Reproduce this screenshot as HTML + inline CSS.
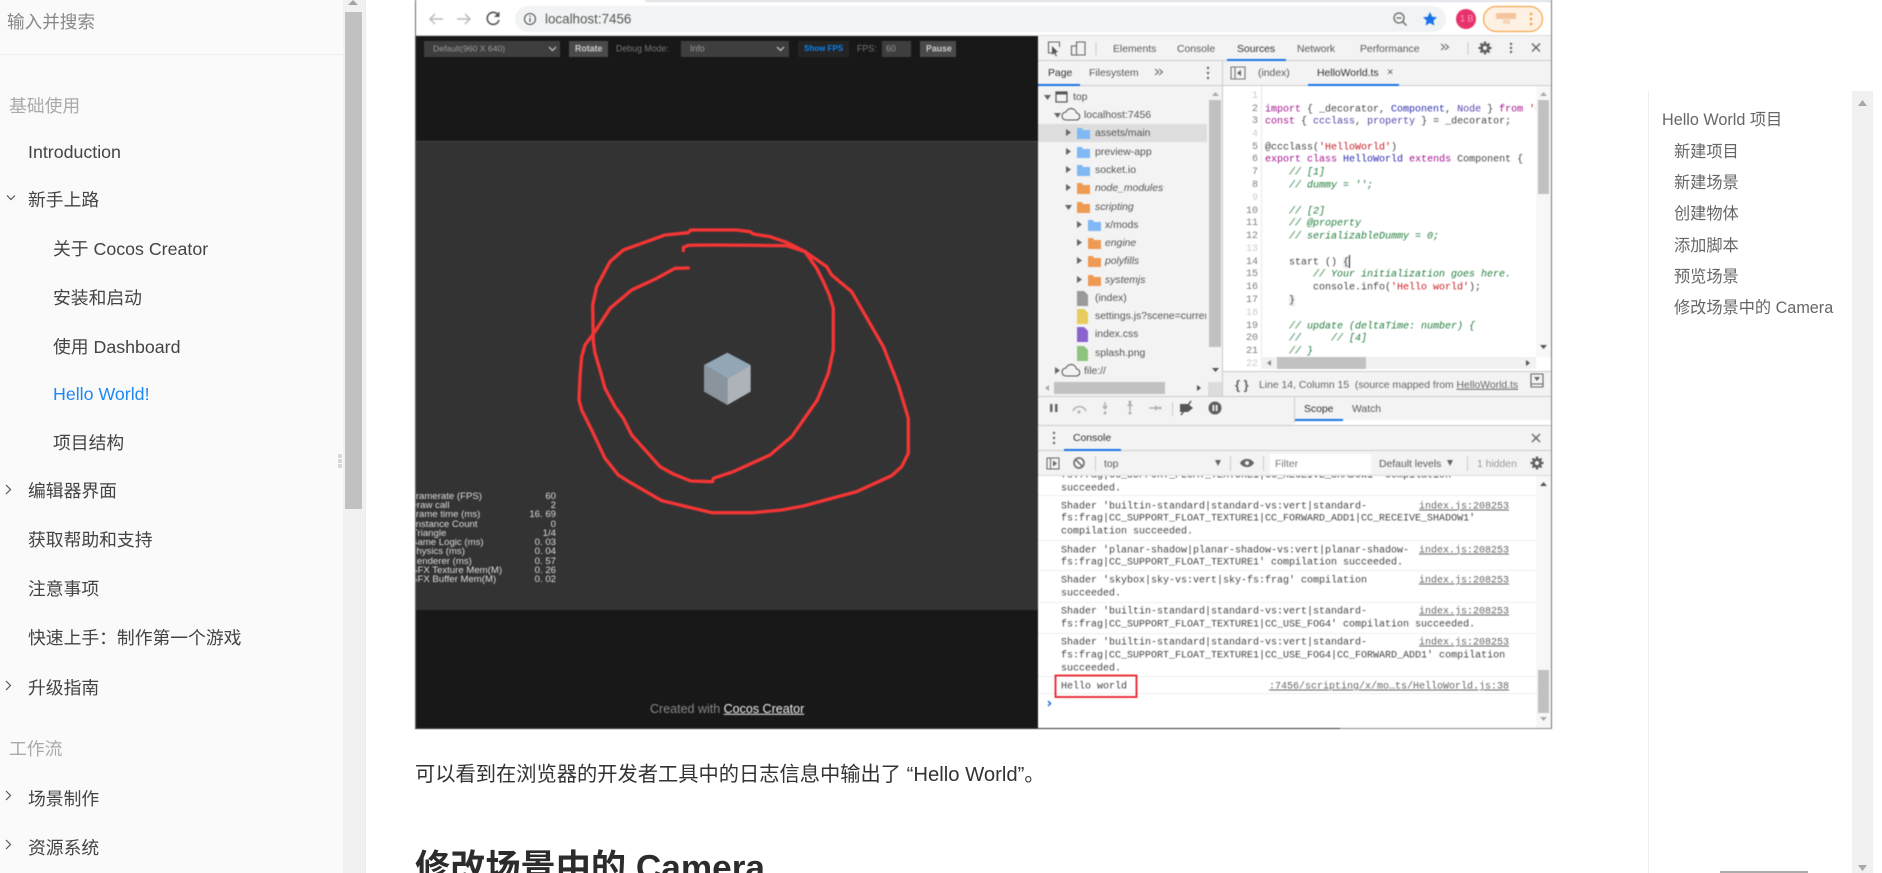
<!DOCTYPE html>
<html lang="zh">
<head>
<meta charset="utf-8">
<title>Hello World</title>
<style>
html,body{margin:0;padding:0;width:1882px;height:873px;overflow:hidden;background:#fff}
body{position:relative;font-family:"Liberation Sans","Noto Sans CJK SC",sans-serif}
svg{position:absolute;left:0;top:0}
.t{position:absolute;white-space:pre;transform:translateY(-50%);line-height:1}
.s{font-size:17.8px;color:#444;margin-top:1.5px}
.g{font-size:17.8px;color:#aaa;margin-top:1.5px}
.c{font-size:16.2px;color:#666;left:1674px;margin-top:1px}
#shot{position:absolute;left:0;top:0;width:1882px;height:873px;filter:blur(.45px)}
.b{font-size:8.8px;color:#999}
.d{font-size:10.4px;color:#5a5a5a;margin-top:1.2px}
.n{font-size:10.4px;color:#555;margin-top:1.2px}
.i{font-style:italic}
.m{font:10px "Liberation Mono",monospace;color:#444;margin-top:1px}
.ln{position:absolute;left:1223px;width:35px;text-align:right;font:10px "Liberation Mono",monospace;color:#808080;transform:translateY(-50%);line-height:1;margin-top:1px}
.l{color:#ccc}
.k{color:#a3128f}.v{color:#2a2ab0}.p{color:#5a3fa8}.q{color:#c8202a}.o{color:#1f7d3a;font-style:italic}
.a{text-decoration:underline;color:#666}
.st{font-size:9.6px;color:#ddd}
</style>
</head>
<body>
<svg width="1882" height="873">
<rect x="0" y="0" width="343" height="873" fill="#fafafa"/>
<rect x="343" y="0" width="22" height="873" fill="#f1f1f1"/>
<rect x="345" y="12" width="17" height="497" fill="#c1c1c1"/>
<polygon points="348,5 353,0 358,5" fill="#a3a3a3"/>
<rect x="365" y="0" width="1" height="873" fill="#ececec"/>
<rect x="0" y="54" width="343" height="1" fill="#eee"/>
<rect x="338" y="454" width="4" height="4" fill="#d8d8d8"/><rect x="338" y="459" width="4" height="4" fill="#d8d8d8"/><rect x="338" y="464" width="4" height="4" fill="#d8d8d8"/>
<g fill="none" stroke="#555" stroke-width="1.2">
<path d="M7 195.500l4 4 4-4"/>
<path d="M6 485l4.500 4.500-4.500 4.500"/>
<path d="M6 681l4.500 4.500-4.500 4.500"/>
<path d="M6 791l4.500 4.500-4.500 4.500"/>
<path d="M6 840l4.500 4.500-4.500 4.500"/>
</g>
<rect x="1648" y="91" width="1" height="782" fill="#eee"/>
<rect x="1852" y="91" width="21" height="782" fill="#f1f1f1"/>
<polygon points="1858,106 1862.500,100 1867,106" fill="#a8a8a8"/>
<polygon points="1858,865 1862.500,871 1867,865" fill="#a8a8a8"/>
<rect x="1720" y="871" width="88" height="2" fill="#aaa"/>
</svg>

<div class="t" style="left:7px;top:23px;font-size:17.6px;color:#888">输入并搜索</div>
<div class="t g" style="left:9px;top:105px">基础使用</div>
<div class="t s" style="left:28px;top:151px">Introduction</div>
<div class="t s" style="left:28px;top:199px">新手上路</div>
<div class="t s" style="left:53px;top:248px">关于 Cocos Creator</div>
<div class="t s" style="left:53px;top:297px">安装和启动</div>
<div class="t s" style="left:53px;top:346px">使用 Dashboard</div>
<div class="t s" style="left:53px;top:393px;color:#1e88f5">Hello World!</div>
<div class="t s" style="left:53px;top:442px">项目结构</div>
<div class="t s" style="left:28px;top:490px">编辑器界面</div>
<div class="t s" style="left:28px;top:539px">获取帮助和支持</div>
<div class="t s" style="left:28px;top:588px">注意事项</div>
<div class="t s" style="left:28px;top:637px">快速上手：制作第一个游戏</div>
<div class="t s" style="left:28px;top:687px">升级指南</div>
<div class="t g" style="left:9px;top:748px">工作流</div>
<div class="t s" style="left:28px;top:798px">场景制作</div>
<div class="t s" style="left:28px;top:847px">资源系统</div>

<div class="t" style="left:415px;top:775px;font-size:20.25px;color:#333">可以看到在浏览器的开发者工具中的日志信息中输出了 “Hello World”。</div>
<div class="t" style="left:415px;top:868px;font-size:35.2px;font-weight:700;color:#2c2c2c">修改场景中的 Camera</div>

<div class="t c" style="left:1662px;top:119px">Hello World 项目</div>
<div class="t c" style="top:151px">新建项目</div>
<div class="t c" style="top:182px">新建场景</div>
<div class="t c" style="top:213px">创建物体</div>
<div class="t c" style="top:245px">添加脚本</div>
<div class="t c" style="top:276px">预览场景</div>
<div class="t c" style="top:307px">修改场景中的 Camera</div>

<div id="shot">
<svg width="1882" height="873">
<rect x="415" y="0" width="1137" height="729" fill="#fff"/>
<rect x="645" y="0" width="906" height="2" fill="#dee1e6"/>
<rect x="416" y="36" width="622" height="105" fill="#181818"/>
<rect x="416" y="141" width="622" height="469" fill="#333"/>
<rect x="416" y="141" width="622" height="1" fill="#444"/>
<rect x="416" y="610" width="622" height="118" fill="#181818"/>
<rect x="415" y="0" width="1" height="729" fill="#666"/>
<rect x="1551" y="0" width="1" height="729" fill="#777"/>
<rect x="415" y="728" width="925" height="1" fill="#333"/>
<rect x="1340" y="728" width="212" height="1" fill="#888"/>
<rect x="416" y="35" width="1135" height="1" fill="#dadce0"/>

<rect x="515" y="6" width="931" height="26" rx="13" fill="#f1f3f4"/>
<g fill="none" stroke="#bbb" stroke-width="1.5"><path d="M443 19H430M435 14l-5 5 5 5"/><path d="M457 19H470M465 14l5 5-5 5"/></g>
<path d="M498.500 15.500A6 6 0 1 0 499 20" fill="none" stroke="#555" stroke-width="1.6"/><polygon points="499.500,11.500 499.500,17 494,17" fill="#555"/>
<circle cx="530" cy="19" r="5.500" fill="none" stroke="#555" stroke-width="1.1"/><path d="M530 18v4M530 15.500v1.300" stroke="#555" stroke-width="1.2"/>
<circle cx="1399" cy="18" r="5" fill="none" stroke="#666" stroke-width="1.3"/><path d="M1402.500 21.500l4 4M1396.500 18h5" stroke="#666" stroke-width="1.3"/>
<polygon points="1430,12 1432.200,16.800 1437,17.300 1433.400,20.600 1434.400,25.500 1430,23 1425.600,25.500 1426.600,20.600 1423,17.300 1427.800,16.800" fill="#1a73e8"/>
<circle cx="1466" cy="19" r="10" fill="#e8336a"/>
<rect x="1483.500" y="6.500" width="59" height="25" rx="12.500" fill="#fdf1e4" stroke="#f5a64e" stroke-width="1.2"/>
<rect x="1496" y="13" width="20" height="6" fill="#f5c49c"/><rect x="1503" y="18" width="7" height="6" fill="#f8d5b8"/>
<g fill="#f0a030"><circle cx="1531" cy="14" r="1.300"/><circle cx="1531" cy="19" r="1.300"/><circle cx="1531" cy="24" r="1.300"/></g>

<rect x="424" y="41" width="136" height="16" fill="#3e3e3e"/>
<rect x="569" y="41" width="39" height="16" fill="#4a4a4a"/>
<rect x="681" y="41" width="108" height="16" fill="#3e3e3e"/>
<rect x="798" y="41" width="51" height="16" fill="#242424"/>
<rect x="882" y="41" width="29" height="16" fill="#3e3e3e"/>
<rect x="920" y="41" width="36" height="16" fill="#4a4a4a"/>
<path d="M549 47l3.500 3.500 3.500-3.500M777 47l3.500 3.500 3.500-3.500" fill="none" stroke="#bbb" stroke-width="1.300"/>

<g transform="translate(560 210) scale(.33333)">
<polygon points="502,428 572,465 502,505 432,465" fill="#93a6b6"/>
<polygon points="432,465 502,505 502,585 432,545" fill="#8a949d"/>
<polygon points="572,465 502,505 502,585 572,545" fill="#adb3b9"/>
<polyline fill="none" stroke="#f53535" stroke-width="10" stroke-linejoin="round" stroke-linecap="round" points="370,122 370,112 385,106 455,105 680,107 735,125 770,175 790,215 808,255 820,295 820,420 805,490 772,570 695,680 630,735 520,785 460,805 458,815 392,813 340,792 300,770 215,675 190,625 165,590 135,535 120,480 105,430 100,395 98,285 110,230 150,155 190,120 315,75 385,68 392,60 530,60 570,65 580,72 630,80 680,97 735,125 800,170 815,195 875,245 970,410 1015,525 1045,625 1045,730 1025,770 995,797 890,845 730,888 665,900 580,908 455,908 305,872 210,817 175,795 135,745 95,660 65,600 57,570 60,500 65,440 75,405 105,365 150,295 215,240 290,205 345,175 385,174"/>
</g>

<!-- devtools surfaces -->
<rect x="1038" y="36" width="513" height="24" fill="#f3f3f3"/>
<rect x="1038" y="60" width="513" height="1" fill="#ccc"/>
<rect x="1038" y="61" width="513" height="24" fill="#f3f3f3"/>
<rect x="1038" y="85" width="513" height="1" fill="#ccc"/>
<rect x="1038" y="86" width="184" height="310" fill="#f3f3f3"/>
<rect x="1038" y="124" width="169" height="18" fill="#ddd"/>
<rect x="1209" y="100" width="12" height="247" fill="#c1c1c1"/>
<polygon points="1212,96 1215.500,92 1219,96" fill="#aaa"/>
<polygon points="1212,368 1215.500,372 1219,368" fill="#555"/>
<rect x="1054" y="382" width="111" height="12" fill="#c1c1c1"/>
<polygon points="1049,385 1045,388 1049,391" fill="#aaa"/>
<polygon points="1197,385 1201,388 1197,391" fill="#555"/>
<rect x="1208" y="382" width="14" height="14" fill="#dcdcdc"/>
<rect x="1222" y="61" width="1" height="335" fill="#ccc"/>
<rect x="1223" y="86" width="328" height="286" fill="#fff"/>
<rect x="1261" y="86" width="1" height="271" fill="#e8e8e8"/>
<rect x="1536" y="86" width="15" height="271" fill="#f7f7f7"/>
<rect x="1538" y="100" width="11" height="94" fill="#c1c1c1"/>
<polygon points="1540,96 1543.500,92 1547,96" fill="#aaa"/>
<polygon points="1540,345 1543.500,349 1547,345" fill="#555"/>
<rect x="1261" y="357" width="275" height="12" fill="#f1f1f1"/>
<rect x="1277" y="357" width="89" height="12" fill="#c1c1c1"/>
<polygon points="1271,360 1267,363 1271,366" fill="#888"/>
<polygon points="1526,360 1530,363 1526,366" fill="#555"/>
<rect x="1223" y="371" width="328" height="1" fill="#ccc"/>
<rect x="1223" y="372" width="328" height="24" fill="#f3f3f3"/>
<rect x="1038" y="396" width="513" height="1" fill="#ccc"/>
<rect x="1038" y="397" width="513" height="23" fill="#f3f3f3"/>
<rect x="1294" y="397" width="1" height="26" fill="#ccc"/>
<rect x="1038" y="420" width="256" height="5" fill="#f3f3f3"/>
<rect x="1295" y="420" width="256" height="5" fill="#fff"/>
<rect x="1295" y="419" width="48" height="2" fill="#1a73e8"/>
<rect x="1038" y="425" width="513" height="1" fill="#ccc"/>
<rect x="1038" y="426" width="513" height="24" fill="#f3f3f3"/>
<rect x="1038" y="450" width="513" height="1" fill="#ccc"/>
<rect x="1038" y="451" width="513" height="24" fill="#f3f3f3"/>
<rect x="1038" y="475" width="513" height="1" fill="#ddd"/>
<rect x="1270" y="454" width="101" height="20" fill="#fff"/>
<rect x="1536" y="476" width="15" height="252" fill="#f7f7f7"/>
<rect x="1538" y="670" width="11" height="43" fill="#c1c1c1"/>
<polygon points="1540,486 1543.500,482 1547,486" fill="#555"/>
<polygon points="1540,717 1543.500,721 1547,717" fill="#aaa"/>
<g fill="#eee"><rect x="1038" y="495" width="498" height="1"/><rect x="1038" y="540" width="498" height="1"/><rect x="1038" y="570" width="498" height="1"/><rect x="1038" y="602" width="498" height="1"/><rect x="1038" y="633" width="498" height="1"/><rect x="1038" y="676" width="498" height="1"/><rect x="1038" y="693" width="498" height="1"/></g>

<!-- tab underlines -->
<rect x="1227" y="59" width="59" height="2" fill="#1a73e8"/>
<rect x="1038" y="84" width="42" height="2" fill="#1a73e8"/>
<rect x="1308" y="84" width="91" height="2" fill="#1a73e8"/>
<rect x="1064" y="449" width="57" height="2" fill="#1a73e8"/>

<!-- toolbar icons -->
<g fill="none" stroke="#666" stroke-width="1.100">
<path d="M1056 53h-7.500v-11h11v5"/>
<path d="M1076.500 42h8.500v13h-13.500v-9h5zM1076.500 46v9"/>
<path d="M1096 42v13M1468 42v13" stroke="#ccc"/>
<path d="M1231 67h14v12h-14z" stroke="#777"/>
<path d="M1235 67v12" stroke="#777"/>
<path d="M1531 374h12v13h-12zM1531 384h12"/>
<path d="M1441 44l3.500 3-3.500 3M1445 44l3.500 3-3.500 3M1155 69l3.500 3-3.500 3M1159 69l3.500 3-3.500 3" stroke="#666"/>
<path d="M1532 43.500l8 8M1540 43.500l-8 8M1532 434l8 8M1540 434l-8 8" stroke="#666" stroke-width="1.400"/>
</g>
<polygon points="1534,377 1540,377 1537,381" fill="#666"/>
<polygon points="1052,46 1058,52 1055,52.500 1057,56 1056,56.500 1054,53 1052,55" fill="#555"/>
<polygon points="1241,70 1237,73 1241,76" fill="#666"/>
<g fill="#666"><circle cx="1511" cy="44" r="1.200"/><circle cx="1511" cy="48" r="1.200"/><circle cx="1511" cy="52" r="1.200"/>
<circle cx="1208" cy="68" r="1.200"/><circle cx="1208" cy="73" r="1.200"/><circle cx="1208" cy="78" r="1.200"/>
<circle cx="1054" cy="433" r="1.200"/><circle cx="1054" cy="438" r="1.200"/><circle cx="1054" cy="443" r="1.200"/></g>
<g stroke="#5f5f5f" stroke-width="2.200"><path d="M1485 41.500v13M1478.500 48h13M1480.500 43.500l9 9M1489.500 43.500l-9 9"/><path d="M1537 456.500v13M1530.500 463h13M1532.500 458.500l9 9M1541.500 458.500l-9 9"/></g>
<circle cx="1485" cy="48" r="4.700" fill="#5f5f5f"/><circle cx="1485" cy="48" r="2.100" fill="#f3f3f3"/>
<circle cx="1537" cy="463" r="4.700" fill="#5f5f5f"/><circle cx="1537" cy="463" r="2.100" fill="#f3f3f3"/>

<!-- tree arrows -->
<g fill="#666">
<polygon points="1044,95 1051,95 1047.500,100"/>
<polygon points="1054,113 1061,113 1057.500,118"/>
<polygon points="1066,129 1066,136 1071,132.500"/>
<polygon points="1066,148 1066,155 1071,151.500"/>
<polygon points="1066,166 1066,173 1071,169.500"/>
<polygon points="1066,184 1066,191 1071,187.500"/>
<polygon points="1065,205 1072,205 1068.500,210"/>
<polygon points="1077,221 1077,228 1082,224.500"/>
<polygon points="1077,239 1077,246 1082,242.500"/>
<polygon points="1077,257 1077,264 1082,260.500"/>
<polygon points="1077,276 1077,283 1082,279.500"/>
<polygon points="1055,367 1055,374 1060,370.500"/>
</g>
<rect x="1056" y="92" width="11" height="10" fill="none" stroke="#555" stroke-width="1.200"/><rect x="1056" y="92" width="11" height="2.500" fill="#555"/>
<g fill="none" stroke="#555" stroke-width="1.100"><path d="M1066 120h10a3.500 3.500 0 0 0 .5-7 5.500 5.500 0 0 0-10.500-1 4 4 0 0 0 0 8z"/><path d="M1066 376h10a3.500 3.500 0 0 0 .5-7 5.500 5.500 0 0 0-10.500-1 4 4 0 0 0 0 8z"/></g>
<g fill="#7fb8f5">
<path d="M1077 128h5l1 2h7v9h-13z"/><path d="M1077 147h5l1 2h7v9h-13z"/><path d="M1077 165h5l1 2h7v9h-13z"/><path d="M1088 220h5l1 2h7v9h-13z"/>
</g>
<g fill="#ee9a52">
<path d="M1077 183h5l1 2h7v9h-13z"/><path d="M1077 202h5l1 2h7v9h-13z"/><path d="M1088 238h5l1 2h7v9h-13z"/><path d="M1088 256h5l1 2h7v9h-13z"/><path d="M1088 275h5l1 2h7v9h-13z"/>
</g>
<path d="M1077 291h7l4 4v11h-11z" fill="#9a9a9a"/>
<path d="M1077 309h7l4 4v11h-11z" fill="#e8cb5c"/>
<path d="M1077 327h7l4 4v11h-11z" fill="#8a63cf"/>
<path d="M1077 346h7l4 4v11h-11z" fill="#8cc47e"/>

<!-- debugger icons -->
<g fill="#666"><rect x="1050" y="404" width="2.500" height="8"/><rect x="1055" y="404" width="2.500" height="8"/></g>
<g fill="none" stroke="#b0b0b0" stroke-width="1.500"><path d="M1073 411a7 7 0 0 1 13 0"/><path d="M1105 402v7M1130 404v7M1149 408h8"/></g>
<g fill="#b0b0b0"><circle cx="1079" cy="412" r="1.500"/><circle cx="1105" cy="413" r="1.500"/><circle cx="1130" cy="402" r="1.500"/><circle cx="1130" cy="413" r="1.500"/><circle cx="1160" cy="408" r="1.500"/><polygon points="1102,406 1108,406 1105,410"/><polygon points="1127,406 1133,406 1130,402"/><polygon points="1155,405 1155,411 1159,408"/></g>
<rect x="1172" y="402" width="1" height="14" fill="#ccc"/>
<path d="M1180 404h8l5 4-5 4h-8z" fill="#555"/><path d="M1181 415l10-14" stroke="#555" stroke-width="1.500"/>
<circle cx="1215" cy="408" r="6.500" fill="#5f5f5f"/><rect x="1212.500" y="405" width="1.800" height="6" fill="#f3f3f3"/><rect x="1215.700" y="405" width="1.800" height="6" fill="#f3f3f3"/>

<!-- console toolbar icons -->
<g fill="none" stroke="#666" stroke-width="1"><rect x="1047" y="458" width="12" height="11"/><path d="M1050.500 458v11"/></g>
<polygon points="1053,460.500 1057,463.500 1053,466.500" fill="#666"/>
<circle cx="1079" cy="463" r="5" fill="none" stroke="#666" stroke-width="1.500"/><path d="M1075.500 459.500l7 7" stroke="#666" stroke-width="1.500"/>
<g fill="#ccc"><rect x="1095" y="456" width="1" height="15"/><rect x="1230" y="456" width="1" height="15"/><rect x="1263" y="456" width="1" height="15"/><rect x="1467" y="456" width="1" height="15"/></g>
<polygon points="1215,460 1221,460 1218,466" fill="#666"/><polygon points="1447,460 1453,460 1450,466" fill="#666"/>
<path d="M1240 463c3-5.500 11-5.500 14 0-3 5.500-11 5.500-14 0z" fill="#666"/><circle cx="1247" cy="463" r="2" fill="#f3f3f3"/>

<rect x="1055.500" y="675.500" width="81" height="21.500" fill="none" stroke="#e8202a" stroke-width="1.800"/>
<path d="M1048 701l2.500 2.500-2.500 2.500" fill="none" stroke="#1a73e8" stroke-width="1.500"/>
</svg>

<div class="t" style="left:545px;top:19px;font-size:13.4px;color:#555">localhost:7456</div>
<div class="t" style="left:1460px;top:19px;font-size:9px;color:#f9c">1 B</div>

<div class="t b" style="left:433px;top:49px;font-size:8.6px">Default(960 X 640)</div>
<div class="t b" style="left:575px;top:49px;color:#ccc;font-weight:700">Rotate</div>
<div class="t b" style="left:616px;top:49px;color:#777">Debug Mode:</div>
<div class="t b" style="left:690px;top:49px">Info</div>
<div class="t b" style="left:804px;top:49px;color:#0a84f0;font-weight:700;font-size:8px">Show FPS</div>
<div class="t b" style="left:857px;top:49px;color:#777">FPS:</div>
<div class="t b" style="left:886px;top:49px">60</div>
<div class="t b" style="left:926px;top:49px;color:#ccc;font-weight:700">Pause</div>

<div style="position:absolute;left:416px;top:0;width:150px;height:873px;overflow:hidden">
<div class="t st" style="left:-6px;top:497px">Framerate (FPS)</div><div class="t st" style="right:10px;top:497px">60</div>
<div class="t st" style="left:-6px;top:506px">Draw call</div><div class="t st" style="right:10px;top:506px">2</div>
<div class="t st" style="left:-6px;top:515px">Frame time (ms)</div><div class="t st" style="right:10px;top:515px">16. 69</div>
<div class="t st" style="left:-3px;top:525px">Instance Count</div><div class="t st" style="right:10px;top:525px">0</div>
<div class="t st" style="left:-4px;top:534px">Triangle</div><div class="t st" style="right:10px;top:534px">1/4</div>
<div class="t st" style="left:-6px;top:543px">Game Logic (ms)</div><div class="t st" style="right:10px;top:543px">0. 03</div>
<div class="t st" style="left:-6px;top:552px">Physics (ms)</div><div class="t st" style="right:10px;top:552px">0. 04</div>
<div class="t st" style="left:-6px;top:562px">Renderer (ms)</div><div class="t st" style="right:10px;top:562px">0. 57</div>
<div class="t st" style="left:-6px;top:571px">GFX Texture Mem(M)</div><div class="t st" style="right:10px;top:571px">0. 26</div>
<div class="t st" style="left:-6px;top:580px">GFX Buffer Mem(M)</div><div class="t st" style="right:10px;top:580px">0. 02</div>
</div>
<div class="t" style="left:650px;top:709px;font-size:12.5px;color:#888">Created with <span style="color:#eee;text-decoration:underline">Cocos Creator</span></div>

<div class="t d" style="left:1113px;top:48.500px">Elements</div>
<div class="t d" style="left:1177px;top:48.500px">Console</div>
<div class="t d" style="left:1237px;top:48.500px;color:#333">Sources</div>
<div class="t d" style="left:1297px;top:48.500px">Network</div>
<div class="t d" style="left:1360px;top:48.500px">Performance</div>
<div class="t d" style="left:1048px;top:73px;color:#333">Page</div>
<div class="t d" style="left:1089px;top:73px">Filesystem</div>
<div class="t d" style="left:1258px;top:73px">(index)</div>
<div class="t d" style="left:1317px;top:73px;color:#333">HelloWorld.ts</div>
<div class="t d" style="left:1387px;top:72px;font-size:11px">×</div>

<div class="t n" style="left:1073px;top:97px">top</div>
<div class="t n" style="left:1084px;top:115px">localhost:7456</div>
<div class="t n" style="left:1095px;top:133px">assets/main</div>
<div class="t n" style="left:1095px;top:152px">preview-app</div>
<div class="t n" style="left:1095px;top:170px">socket.io</div>
<div class="t n i" style="left:1095px;top:188px">node_modules</div>
<div class="t n i" style="left:1095px;top:207px">scripting</div>
<div class="t n" style="left:1105px;top:225px">x/mods</div>
<div class="t n i" style="left:1105px;top:243px">engine</div>
<div class="t n i" style="left:1105px;top:261px">polyfills</div>
<div class="t n i" style="left:1105px;top:280px">systemjs</div>
<div class="t n" style="left:1095px;top:298px">(index)</div>
<div class="t n" style="left:1095px;top:316px;width:111px;overflow:hidden">settings.js?scene=current_scene</div>
<div class="t n" style="left:1095px;top:334px">index.css</div>
<div class="t n" style="left:1095px;top:353px">splash.png</div>
<div class="t n" style="left:1084px;top:371px">file://</div>

<div class="ln l" style="top:96px">1</div><div class="ln" style="top:108.500px">2</div><div class="ln" style="top:121px">3</div><div class="ln l" style="top:134px">4</div><div class="ln" style="top:146.500px">5</div><div class="ln" style="top:159px">6</div><div class="ln" style="top:172px">7</div><div class="ln" style="top:185px">8</div><div class="ln l" style="top:197.500px">9</div><div class="ln" style="top:210.500px">10</div><div class="ln" style="top:223px">11</div><div class="ln" style="top:236px">12</div><div class="ln l" style="top:249px">13</div><div class="ln" style="top:261.500px">14</div><div class="ln" style="top:274px">15</div><div class="ln" style="top:287px">16</div><div class="ln" style="top:300px">17</div><div class="ln l" style="top:313px">18</div><div class="ln" style="top:325.500px">19</div><div class="ln" style="top:338px">20</div><div class="ln" style="top:351px">21</div><div class="ln l" style="top:364px">22</div>

<div style="position:absolute;left:1265px;top:0;width:271px;height:357px;overflow:hidden">
<div class="t m" style="left:0;top:108.500px"><span class="k">import</span> { _decorator, <span class="v">Component</span>, <span class="p">Node</span> } <span class="k">from</span> <span class="q">'cc';</span></div>
<div class="t m" style="left:0;top:121px"><span class="k">const</span> { <span class="p">ccclass</span>, <span class="p">property</span> } = _decorator;</div>
<div class="t m" style="left:0;top:146.500px">@ccclass(<span class="q">'HelloWorld'</span>)</div>
<div class="t m" style="left:0;top:159px"><span class="k">export class</span> <span class="v">HelloWorld</span> <span class="k">extends</span> Component {</div>
<div class="t m o" style="left:0;top:172px">    // [1]</div>
<div class="t m o" style="left:0;top:185px">    // dummy = '';</div>
<div class="t m o" style="left:0;top:210.500px">    // [2]</div>
<div class="t m o" style="left:0;top:223px">    // @property</div>
<div class="t m o" style="left:0;top:236px">    // serializableDummy = 0;</div>
<div class="t m" style="left:0;top:261.500px">    start () <span style="background:#eee">{</span></div>
<div class="t m o" style="left:0;top:274px">        // Your initialization goes here.</div>
<div class="t m" style="left:0;top:287px">        console.info(<span class="q">'Hello world'</span>);</div>
<div class="t m" style="left:0;top:300px">    <span style="background:#eee">}</span></div>
<div class="t m o" style="left:0;top:325.500px">    // update (deltaTime: number) {</div>
<div class="t m o" style="left:0;top:338px">    //     // [4]</div>
<div class="t m o" style="left:0;top:351px">    // }</div>
</div>
<div style="position:absolute;left:1349px;top:255px;width:1px;height:13px;background:#222"></div>

<div class="t d" style="left:1235px;top:384px;font-size:13px;font-weight:700;color:#666">{ }</div>
<div class="t d" style="left:1259px;top:385px;width:261px;overflow:hidden;color:#666">Line 14, Column 15  (source mapped from <u>HelloWorld.ts</u></div>
<div class="t d" style="left:1304px;top:409px;color:#333">Scope</div>
<div class="t d" style="left:1352px;top:409px">Watch</div>
<div class="t d" style="left:1073px;top:438px;color:#333">Console</div>
<div class="t d" style="left:1104px;top:464px">top</div>
<div class="t d" style="left:1275px;top:464px;color:#777">Filter</div>
<div class="t d" style="left:1379px;top:463.500px">Default levels</div>
<div class="t d" style="left:1477px;top:463.500px;color:#999">1 hidden</div>

<div style="position:absolute;left:1038px;top:476px;width:498px;height:252px;overflow:hidden">
<div class="t m" style="left:23px;top:-1px">fs:frag|CC_SUPPORT_FLOAT_TEXTURE1|CC_RECEIVE_SHADOW1' compilation</div>
<div class="t m" style="left:23px;top:11.500px">succeeded.</div>
<div class="t m" style="left:23px;top:29.500px">Shader 'builtin-standard|standard-vs:vert|standard-</div>
<div class="t m" style="left:23px;top:42px">fs:frag|CC_SUPPORT_FLOAT_TEXTURE1|CC_FORWARD_ADD1|CC_RECEIVE_SHADOW1'</div>
<div class="t m" style="left:23px;top:55px">compilation succeeded.</div>
<div class="t m" style="left:23px;top:73.500px">Shader 'planar-shadow|planar-shadow-vs:vert|planar-shadow-</div>
<div class="t m" style="left:23px;top:86px">fs:frag|CC_SUPPORT_FLOAT_TEXTURE1' compilation succeeded.</div>
<div class="t m" style="left:23px;top:104px">Shader 'skybox|sky-vs:vert|sky-fs:frag' compilation</div>
<div class="t m" style="left:23px;top:117px">succeeded.</div>
<div class="t m" style="left:23px;top:135px">Shader 'builtin-standard|standard-vs:vert|standard-</div>
<div class="t m" style="left:23px;top:148px">fs:frag|CC_SUPPORT_FLOAT_TEXTURE1|CC_USE_FOG4' compilation succeeded.</div>
<div class="t m" style="left:23px;top:166px">Shader 'builtin-standard|standard-vs:vert|standard-</div>
<div class="t m" style="left:23px;top:179px">fs:frag|CC_SUPPORT_FLOAT_TEXTURE1|CC_USE_FOG4|CC_FORWARD_ADD1' compilation</div>
<div class="t m" style="left:23px;top:192px">succeeded.</div>
<div class="t m" style="left:23px;top:210px">Hello world</div>
<div class="t m a" style="left:381px;top:29.500px">index.js:208253</div>
<div class="t m a" style="left:381px;top:73.500px">index.js:208253</div>
<div class="t m a" style="left:381px;top:104px">index.js:208253</div>
<div class="t m a" style="left:381px;top:135px">index.js:208253</div>
<div class="t m a" style="left:381px;top:166px">index.js:208253</div>
<div class="t m a" style="left:231px;top:210px">:7456/scripting/x/mo…ts/HelloWorld.js:38</div>
</div>
</div>
</body>
</html>
